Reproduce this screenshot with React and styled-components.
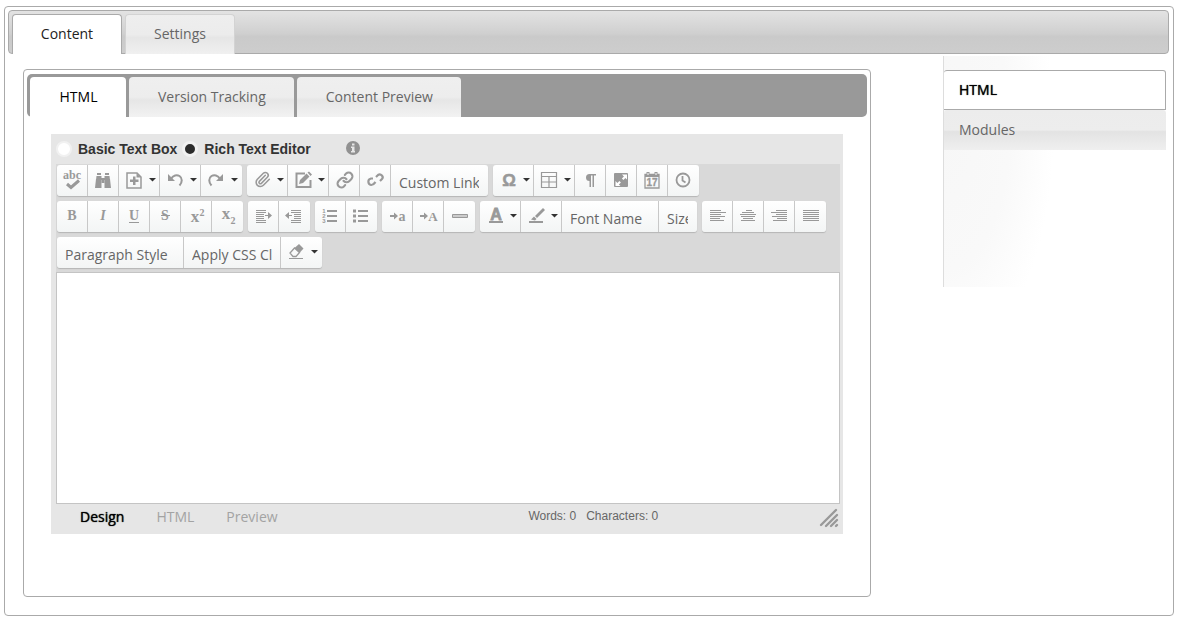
import React, { useState } from 'react';
import styled, { createGlobalStyle } from 'styled-components';
import { Paperclip, Link } from 'lucide-react';

const GlobalStyle = createGlobalStyle`
  * {
    box-sizing: border-box;
  }

  body {
    margin: 0;
    background: #fff;
    color: #666;
    font-family: 'Open Sans', sans-serif;
    font-size: 14px;
  }

  button, select, textarea {
    font: inherit;
    color: inherit;
    margin: 0;
  }
`;

const Page = styled.div`
  padding: 6px 5px 4px 4px;
`;

const Frame = styled.div`
  border: 1px solid #aaa;
  border-radius: 4px;
  padding: 3px 4px 18px 3px;
`;

const TopTabs = styled.div`
  display: flex;
  gap: 3px;
  height: 44px;
  padding: 3px 3px 0;
  border: 1px solid #aaa;
  border-radius: 4px;
  background: linear-gradient(#e3e3e3, #cfcfcf 55%, #cacaca 60%, #cdcdcd);
`;

const TopTab = styled.button`
  width: 110px;
  height: 40px;
  padding: 0 0 2px;
  border: 1px solid ${props => (props.$active ? '#aaa' : '#d3d3d3')};
  border-bottom: none;
  border-radius: 4px 4px 0 0;
  color: ${props => (props.$active ? '#222' : '#666')};
  background: ${props => (props.$active ? '#fff' : 'linear-gradient(#eee, #ececec 50%, #e6e6e6 58%, #f0f0f0)')};
`;

const Main = styled.div`
  display: flex;
  align-items: flex-start;
  justify-content: space-between;
  gap: 72px;
  padding: 2px 3px 0 15px;
`;

const Panel = styled.section`
  flex: 1;
  min-width: 0;
  margin-top: 13px;
  padding: 4px 3px 62px;
  border: 1px solid #aaa;
  border-radius: 4px;
`;

const PanelTabs = styled.div`
  display: flex;
  gap: 3px;
  padding: 3px 3px 0;
  border-radius: 5px;
  background: #999;
`;

const PanelTab = styled.button`
  min-width: 96px;
  height: 40px;
  padding: 0 28px 2px 29px;
  border: none;
  border-radius: 4px 4px 0 0;
  white-space: nowrap;
  color: ${props => (props.$active ? '#000' : '#666')};
  background: ${props => (props.$active ? '#fff' : 'linear-gradient(#efefef, #ededed 50%, #e6e6e6 58%, #f2f2f2)')};
`;

const Editor = styled.div`
  margin: 17px 24px 0;
  padding: 0 3px 0 5px;
  background: #e6e6e6;
`;

const ModeRow = styled.div`
  display: flex;
  align-items: center;
  gap: 5px;
  height: 30px;
  color: #333;
  font-family: 'Liberation Sans', Arial, sans-serif;
  font-weight: bold;

  label {
    display: flex;
    align-items: center;
    gap: 6px;
  }
`;

const Radio = styled.input`
  appearance: none;
  width: 16px;
  height: 16px;
  margin: 0;
  border: 2px solid #f1f1f1;
  border-radius: 50%;
  background: #fff;

  &:checked {
    border-width: 3px;
    background: #2b2b2b;
  }
`;

const InfoButton = styled.button`
  display: flex;
  margin-left: 30px;
  padding: 0 0 3px;
  border: none;
  background: none;
`;

const Toolbar = styled.div`
  display: flex;
  flex-direction: column;
  gap: 5px;
  padding: 1px 0 4px 1px;
  background: #d9d9d9;
`;

const ToolRow = styled.div`
  display: flex;
  flex-wrap: wrap;
  gap: 5px;
`;

const ToolGroup = styled.div`
  display: flex;
  height: 31px;
  border-radius: 3px;
  background: linear-gradient(#fff, #f3f5f5);
  box-shadow: 0 1px 1px #b5b5b5;
`;

const ToolButton = styled.button`
  display: flex;
  align-items: center;
  gap: 5px;
  width: ${props => (props.$menu ? 41 : 31)}px;
  padding: 0 0 1px 5px;
  border: none;
  border-right: 1px solid #c8c8c8;
  background: none;
  color: #999;

  &:last-child {
    border-right-color: transparent;
  }
`;

const ToolSelect = styled.select`
  appearance: none;
  width: ${props => props.$width}px;
  padding: 4px 8px 0;
  border: none;
  border-right: 1px solid #c8c8c8;
  border-radius: 0;
  background: none;
  outline: none;

  &:last-child {
    border-right-color: transparent;
  }
`;

const Canvas = styled.textarea`
  display: block;
  width: 100%;
  height: 232px;
  padding: 8px;
  border: 1px solid #c4c4c4;
  background: #fff;
  resize: none;
  outline: none;
`;

const Footer = styled.div`
  display: flex;
  align-items: center;
  height: 30px;
  padding: 0 1px 2px 24px;
`;

const ViewTabs = styled.div`
  display: flex;
  gap: 32px;
  padding-bottom: 4px;
`;

const ViewTab = styled.button`
  padding: 0;
  border: none;
  background: none;
  color: ${props => (props.$active ? '#000' : '#a3a3a3')};
  text-shadow: ${props => (props.$active ? '0 0 1px #000' : 'none')};
`;

const Counts = styled.div`
  display: flex;
  gap: 10px;
  flex: 1;
  justify-content: center;
  padding: 0 0 4px 90px;
  font-family: 'Liberation Sans', Arial, sans-serif;
  font-size: 12px;
`;

const Side = styled.nav`
  width: 223px;
  min-height: 231px;
  padding-top: 14px;
  border-left: 1px solid #ddd;
  background: radial-gradient(ellipse 110px 240px at 0 70px, #f7f7f7, #f9f9f9 60%, #fff);
`;

const SideLink = styled.a`
  display: flex;
  align-items: center;
  height: 40px;
  padding: 0 0 2px 15px;
  text-decoration: none;
  color: ${props => (props.$active ? '#000' : '#666')};
  text-shadow: ${props => (props.$active ? '0 0 1px #000' : 'none')};
  background: ${props => (props.$active ? '#fff' : 'linear-gradient(#ececec, #ededed 50%, #e3e3e3 54%, #efefef)')};
  border: ${props => (props.$active ? '1px solid #aaa' : 'none')};
  border-left: none;
  border-radius: 3px 3px 0 0;
`;

const SERIF = "'Liberation Serif', serif";
const SANS = "'Liberation Sans', sans-serif";

const IconSvg = styled.svg`
  overflow: visible;
  flex: none;
`;

const Icon = ({ children }) => (
  <IconSvg width="20" height="20" viewBox="0 0 20 20" fill="currentColor" aria-hidden="true">
    {children}
  </IconSvg>
);

const Glyph = ({ x = 10, y = 14, size = 14, font = SERIF, children, ...rest }) => (
  <text x={x} y={y} textAnchor="middle" fontFamily={font} fontSize={size} fontWeight="bold" {...rest}>
    {children}
  </text>
);

// each line is [x, width], drawn from the top down
const Lines = ({ lines, top = 4, step = 2 }) =>
  lines.map(([x, w], i) => <rect key={i} x={x} y={top + i * step} width={w} height="1" />);

const Caret = () => (
  <svg width="7" height="4" viewBox="0 0 7 4" fill="#333" aria-hidden="true">
    <path d="M0 0h7L3.5 3.5z" />
  </svg>
);

const icons = {
  spell: (
    <>
      <Glyph x={10} y={9} size={12}>abc</Glyph>
      <path d="M5 14l4 3.500 8-7" fill="none" stroke="currentColor" strokeWidth="3" />
    </>
  ),
  find: (
    <>
      <path d="M4 3h4v2H4zM12 3h4v2h-4zM3.500 6h5v4H3zM11.500 6h5l.5 4h-5.500zM8.500 8h3v5h-3z" />
      <path d="M3 9h5.500v9H2zM11.500 9H17l1 9h-6.500z" />
    </>
  ),
  insert: (
    <>
      <path d="M3 3h10l4 4v11H3z" fill="none" stroke="currentColor" strokeWidth="1.500" />
      <path d="M12.500 3v4.500H17z" />
      <path d="M9 6.500h2.500v3h3V12h-3v3H9v-3H6V9.500h3z" />
    </>
  ),
  undo: (
    <>
      <path d="M6 9c2-4 6-4.500 8.500-3 3 2 3 6 0 9.500" fill="none" stroke="currentColor" strokeWidth="2" />
      <path d="M3 4v7h7z" />
    </>
  ),
  redo: (
    <>
      <path d="M14 9c-2-4-6-4.500-8.500-3-3 2-3 6 0 9.500" fill="none" stroke="currentColor" strokeWidth="2" />
      <path d="M17 4v7h-7z" />
    </>
  ),
  clip: <Paperclip x={2} y={1} width={17} height={17} strokeWidth={2.2} />,
  edit: (
    <>
      <path d="M12 3.500H3.500v13.500h14V10" fill="none" stroke="currentColor" strokeWidth="2" />
      <path d="M6 14l1-4 6.500-6.500 3 3L10 13zM14.500 2.500L16 1.500l3 3-1.500 1.500z" />
    </>
  ),
  link: <Link x={2} y={1} width={18} height={18} strokeWidth={2.8} />,
  unlink: (
    <path
      d="M11 7l2-2c3-2 6 2 4 4l-2 2M8 8.500H6c-4 1-3 6 0 6.500 2 .3 3-1 4.500-3"
      fill="none"
      stroke="currentColor"
      strokeWidth="2.200"
    />
  ),
  omega: <Glyph x={11} y={16} size={17} font={SANS} stroke="currentColor" strokeWidth=".5">Ω</Glyph>,
  table: <path d="M2.500 2.500h15v15h-15zM2.500 6.500h15M2.500 12h15M10 6.500v11" fill="none" stroke="currentColor" strokeWidth="1.200" />,
  pilcrow: (
    <path d="M16 4H9.500a3.500 3.500 0 0 0 0 7v6H11V5.500h1.500V17H14V5.500h2z" />
  ),
  expand: (
    <>
      <rect x="3" y="3" width="14" height="14" rx="1" />
      <path d="M11 4.500h5v5l-1.600-1.600-2 2-1.500-1.500 2-2zM4.500 11v5h5l-1.600-1.600 2-2-1.500-1.500-2 2z" fill="#fff" />
    </>
  ),
  calendar: (
    <>
      <path d="M3 4.500h14v13.500H3z" fill="none" stroke="currentColor" strokeWidth="1.300" />
      <path d="M3 4h14v3H3zM4.500 2h3v3h-3zM12.500 2h3v3h-3z" />
      <path d="M5.500 3h1v2h-1zM13.500 3h1v2h-1z" fill="#fff" />
      <Glyph y={16} size={10} font={SANS} stroke="currentColor" strokeWidth=".3">17</Glyph>
    </>
  ),
  clock: (
    <path
      d="M16.500 10a6.500 6.500 0 1 1-13 0 6.500 6.500 0 0 1 13 0zM9.500 6v4.500l3 2"
      fill="none"
      stroke="currentColor"
      strokeWidth="1.800"
    />
  ),
  bold: <Glyph y={14}>B</Glyph>,
  italic: <Glyph y={14} fontStyle="italic">I</Glyph>,
  underline: (
    <>
      <Glyph y={14}>U</Glyph>
      <rect x="5" y="16" width="10" height="1" />
    </>
  ),
  strike: (
    <>
      <Glyph y={14}>S</Glyph>
      <rect x="6" y="9" width="9" height="1" />
    </>
  ),
  sup: (
    <>
      <Glyph x={9} y={16} size={17}>x</Glyph>
      <Glyph x={16} y={10} size={10}>2</Glyph>
    </>
  ),
  sub: (
    <>
      <Glyph x={9} y={13} size={17}>x</Glyph>
      <Glyph x={16} y={18} size={10}>2</Glyph>
    </>
  ),
  indent: (
    <>
      <Lines top={4} lines={[[3, 10], [3, 10], [3, 8], [3, 8], [3, 8], [3, 10], [3, 10]]} />
      <path d="M12 9h3V6l4 3.500-4 3.500v-3h-3z" />
    </>
  ),
  outdent: (
    <>
      <Lines top={4} lines={[[7, 10], [7, 10], [10, 7], [10, 7], [10, 7], [7, 10], [7, 10]]} />
      <path d="M8 9H5V6L1 9.500 5 13v-3h3z" />
    </>
  ),
  ordered: (
    <>
      <path d="M7 4h10v2H7zM7 9h10v2H7zM7 14h10v2H7z" />
      <Glyph x={4} y={7} size={6} font={SANS}>1</Glyph>
      <Glyph x={4} y={12} size={6} font={SANS}>2</Glyph>
      <Glyph x={4} y={17} size={6} font={SANS}>3</Glyph>
    </>
  ),
  bullets: (
    <path d="M7 4h10v2H7zM7 9h10v2H7zM7 14h10v2H7zM2 3.500h3v3H2zM2 8.500h3v3H2zM2 13.500h3v3H2z" />
  ),
  lower: (
    <>
      <path d="M3 9h4V6.500L11 10l-4 3.500V11H3z" />
      <Glyph x={15} y={15} size={14}>a</Glyph>
    </>
  ),
  upper: (
    <>
      <path d="M2 9h4V6.500L10 10l-4 3.500V11H2z" />
      <Glyph x={15} y={15} size={13}>A</Glyph>
    </>
  ),
  rule: <path d="M3.500 8.500h15v3h-15z" fill="#ccc" stroke="currentColor" />,
  color: (
    <>
      <Glyph x={11} y={14} size={16} font={SANS} stroke="currentColor" strokeWidth=".8">A</Glyph>
      <rect x="4" y="15" width="14" height="2" />
    </>
  ),
  highlight: (
    <>
      <path d="M5 13.500l3-3 2.500 2.500-1.500 1.500zM9 10l8-8 2 2-8 8z" />
      <rect x="3" y="15" width="14" height="2" />
    </>
  ),
  left: <Lines lines={[[3, 11], [3, 16], [3, 11], [3, 15], [3, 10], [3, 14]]} />,
  center: <Lines lines={[[8, 6], [4, 12], [2, 16], [3, 14], [5, 10], [3, 14]]} />,
  right: <Lines lines={[[7, 11], [2, 16], [7, 11], [3, 15], [8, 10], [4, 14]]} />,
  justify: <Lines lines={[[3, 16], [3, 16], [3, 16], [3, 16], [3, 16], [3, 16]]} />,
  eraser: (
    <>
      <path d="M8.500 6l4.500-4 4.500 4.500-4 4.500z" />
      <path d="M8.500 6l5 4.500-3.500 4H7L4 11z" fill="none" stroke="currentColor" strokeWidth="1.300" />
      <rect x="3" y="16" width="14" height="1" />
    </>
  ),
};

const rows = [
  [
    [
      { icon: 'spell', label: 'Spell check' },
      { icon: 'find', label: 'Find and replace' },
      { icon: 'insert', label: 'Insert', menu: true },
      { icon: 'undo', label: 'Undo', menu: true },
      { icon: 'redo', label: 'Redo', menu: true },
    ],
    [
      { icon: 'clip', label: 'Attach', menu: true },
      { icon: 'edit', label: 'Templates', menu: true },
      { icon: 'link', label: 'Insert link' },
      { icon: 'unlink', label: 'Remove link' },
      { select: 'Custom Links', width: 97 },
    ],
    [
      { icon: 'omega', label: 'Insert symbol', menu: true },
      { icon: 'table', label: 'Insert table', menu: true },
      { icon: 'pilcrow', label: 'New paragraph' },
      { icon: 'expand', label: 'Full screen' },
      { icon: 'calendar', label: 'Insert date' },
      { icon: 'clock', label: 'Insert time' },
    ],
  ],
  [
    [
      { icon: 'bold', label: 'Bold' },
      { icon: 'italic', label: 'Italic' },
      { icon: 'underline', label: 'Underline' },
      { icon: 'strike', label: 'Strikethrough' },
      { icon: 'sup', label: 'Superscript' },
      { icon: 'sub', label: 'Subscript' },
    ],
    [
      { icon: 'indent', label: 'Indent' },
      { icon: 'outdent', label: 'Outdent' },
    ],
    [
      { icon: 'ordered', label: 'Numbered list' },
      { icon: 'bullets', label: 'Bullet list' },
    ],
    [
      { icon: 'lower', label: 'Lower case' },
      { icon: 'upper', label: 'Upper case' },
      { icon: 'rule', label: 'Horizontal rule' },
    ],
    [
      { icon: 'color', label: 'Text color', menu: true },
      { icon: 'highlight', label: 'Highlight', menu: true },
      { select: 'Font Name', width: 97 },
      { select: 'Size', width: 38 },
    ],
    [
      { icon: 'left', label: 'Align left' },
      { icon: 'center', label: 'Align center' },
      { icon: 'right', label: 'Align right' },
      { icon: 'justify', label: 'Justify' },
    ],
  ],
  [
    [
      { select: 'Paragraph Style', width: 127 },
      { select: 'Apply CSS Class', width: 97 },
      { icon: 'eraser', label: 'Clear formatting', menu: true },
    ],
  ],
];

const Tool = ({ tool }) => {
  if (tool.select) {
    return (
      <ToolSelect $width={tool.width} aria-label={tool.select}>
        <option>{tool.select}</option>
      </ToolSelect>
    );
  }
  return (
    <ToolButton type="button" $menu={tool.menu} aria-label={tool.label}>
      <Icon>{icons[tool.icon]}</Icon>
      {tool.menu && <Caret />}
    </ToolButton>
  );
};

const App = () => {
  const [section, setSection] = useState('Content');
  const [tab, setTab] = useState('HTML');
  const [mode, setMode] = useState('rich');
  const [view, setView] = useState('Design');
  const [text, setText] = useState('');

  const words = text.split(/\s+/).filter(Boolean).length;

  return (
    <Page>
      <GlobalStyle />
      <Frame>
        <TopTabs role="tablist">
          {['Content', 'Settings'].map(name => (
            <TopTab
              key={name}
              type="button"
              role="tab"
              aria-selected={section === name}
              $active={section === name}
              onClick={() => setSection(name)}
            >
              {name}
            </TopTab>
          ))}
        </TopTabs>

        <Main>
          <Panel>
            <PanelTabs role="tablist">
              {['HTML', 'Version Tracking', 'Content Preview'].map(name => (
                <PanelTab
                  key={name}
                  type="button"
                  role="tab"
                  aria-selected={tab === name}
                  $active={tab === name}
                  onClick={() => setTab(name)}
                >
                  {name}
                </PanelTab>
              ))}
            </PanelTabs>

            <Editor>
              <ModeRow>
                <label>
                  <Radio type="radio" name="mode" checked={mode === 'basic'} onChange={() => setMode('basic')} />
                  Basic Text Box
                </label>
                <label>
                  <Radio type="radio" name="mode" checked={mode === 'rich'} onChange={() => setMode('rich')} />
                  Rich Text Editor
                </label>
                <InfoButton type="button" aria-label="Help">
                  <svg width="14" height="14" viewBox="0 0 14 14">
                    <circle cx="7" cy="7" r="7" fill="#919191" />
                    <path d="M6 2.500h2.500v2H6zM5 5.500h3.500V10H9v1.500H5V10h1V7H5z" fill="#e6e6e6" />
                  </svg>
                </InfoButton>
              </ModeRow>

              <Toolbar>
                {rows.map((groups, r) => (
                  <ToolRow key={r}>
                    {groups.map((tools, g) => (
                      <ToolGroup key={g}>
                        {tools.map(tool => (
                          <Tool key={tool.icon || tool.select} tool={tool} />
                        ))}
                      </ToolGroup>
                    ))}
                  </ToolRow>
                ))}
              </Toolbar>

              <Canvas aria-label="Content" value={text} onChange={e => setText(e.target.value)} />

              <Footer>
                <ViewTabs>
                  {['Design', 'HTML', 'Preview'].map(name => (
                    <ViewTab key={name} type="button" $active={view === name} onClick={() => setView(name)}>
                      {name}
                    </ViewTab>
                  ))}
                </ViewTabs>
                <Counts>
                  <span>Words: {words}</span>
                  <span>Characters: {text.length}</span>
                </Counts>
                <svg width="20" height="20" viewBox="0 0 20 20" aria-hidden="true">
                  <path
                    d="M2 17L17 2M7 18L18 7M12 18l6-6M17 18l1-1"
                    fill="none"
                    stroke="#999"
                    strokeWidth="2.400"
                    strokeLinecap="round"
                  />
                </svg>
              </Footer>
            </Editor>
          </Panel>

          <Side>
            <SideLink href="#html" $active>HTML</SideLink>
            <SideLink href="#modules">Modules</SideLink>
          </Side>
        </Main>
      </Frame>
    </Page>
  );
};

export default App;
